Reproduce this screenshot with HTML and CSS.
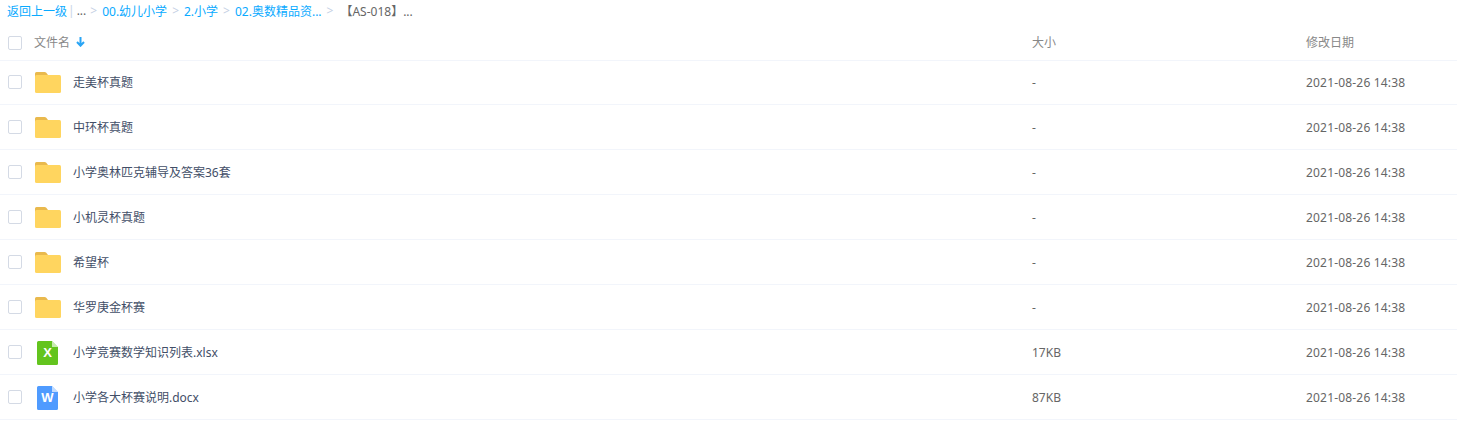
FILE: index.html
```html
<!DOCTYPE html>
<html lang="zh-CN">
<head>
    <meta charset="UTF-8">
    <title>文件列表</title>
    <link rel="stylesheet" href="styles.css">
</head>
<body>
    <svg class="icon-defs" width="0" height="0">
        <symbol id="folder" viewBox="0 0 26 21">
            <path d="M0 5V1.500A1.500 1.500 0 0 1 1.500 0h8c.8 0 1.300.3 1.800.8L13 3v2z" fill="#e9b94d"/>
            <rect y="3" width="26" height="18" rx="1.500" fill="#ffd55f"/>
        </symbol>
        <symbol id="file" viewBox="0 0 21 24">
            <path d="M1.500 0H15l6 6v16.500a1.500 1.500 0 0 1-1.500 1.500h-18A1.500 1.500 0 0 1 0 22.500v-21A1.500 1.500 0 0 1 1.500 0z" fill="currentColor"/>
            <path d="M15 0l6 6h-6z" fill="#fff" opacity=".65"/>
        </symbol>
    </svg>

    <div class="crumbs">
        <a href="#">返回上一级</a><span class="bar">|</span><span class="more">...</span>
        <span class="sep">&gt;</span><a href="#">00.幼儿小学</a>
        <span class="sep">&gt;</span><a href="#">2.小学</a>
        <span class="sep">&gt;</span><a href="#">02.奥数精品资...</a>
        <span class="sep">&gt;</span><span class="current">【AS-018】...</span>
    </div>

    <div class="row head">
        <span class="check"></span>
        <span class="name-head">文件名
            <svg class="sort" width="9" height="10" viewBox="0 0 9 10"><path d="M4.500 0v8.500M1 5l3.500 3.700L8 5" fill="none" stroke="#2aa5f5" stroke-width="2"/></svg>
        </span>
        <span class="size">大小</span>
        <span class="date">修改日期</span>
    </div>

    <div class="row">
        <span class="check"></span>
        <span class="icon"><svg width="26" height="21"><use href="#folder"/></svg></span>
        <span class="name">走美杯真题</span>
        <span class="size">-</span>
        <span class="date">2021-08-26 14:38</span>
    </div>
    <div class="row">
        <span class="check"></span>
        <span class="icon"><svg width="26" height="21"><use href="#folder"/></svg></span>
        <span class="name">中环杯真题</span>
        <span class="size">-</span>
        <span class="date">2021-08-26 14:38</span>
    </div>
    <div class="row">
        <span class="check"></span>
        <span class="icon"><svg width="26" height="21"><use href="#folder"/></svg></span>
        <span class="name">小学奥林匹克辅导及答案36套</span>
        <span class="size">-</span>
        <span class="date">2021-08-26 14:38</span>
    </div>
    <div class="row">
        <span class="check"></span>
        <span class="icon"><svg width="26" height="21"><use href="#folder"/></svg></span>
        <span class="name">小机灵杯真题</span>
        <span class="size">-</span>
        <span class="date">2021-08-26 14:38</span>
    </div>
    <div class="row">
        <span class="check"></span>
        <span class="icon"><svg width="26" height="21"><use href="#folder"/></svg></span>
        <span class="name">希望杯</span>
        <span class="size">-</span>
        <span class="date">2021-08-26 14:38</span>
    </div>
    <div class="row">
        <span class="check"></span>
        <span class="icon"><svg width="26" height="21"><use href="#folder"/></svg></span>
        <span class="name">华罗庚金杯赛</span>
        <span class="size">-</span>
        <span class="date">2021-08-26 14:38</span>
    </div>
    <div class="row">
        <span class="check"></span>
        <span class="icon">
            <span class="file xls"><svg width="21" height="24"><use href="#file"/></svg><b>X</b></span>
        </span>
        <span class="name">小学竞赛数学知识列表.xlsx</span>
        <span class="size">17KB</span>
        <span class="date">2021-08-26 14:38</span>
    </div>
    <div class="row">
        <span class="check"></span>
        <span class="icon">
            <span class="file doc"><svg width="21" height="24"><use href="#file"/></svg><b>W</b></span>
        </span>
        <span class="name">小学各大杯赛说明.docx</span>
        <span class="size">87KB</span>
        <span class="date">2021-08-26 14:38</span>
    </div>
</body>
</html>
```

FILE: styles.css
```css
/* Reset */
* {
    margin: 0;
    padding: 0;
    box-sizing: border-box;
}

body {
    background: #fff;
    font-family: "Noto Sans", "Noto Sans CJK SC", sans-serif;
    font-size: 12px;
    color: #424e67;
    overflow: hidden;
}

.icon-defs {
    position: absolute;
}

/* Breadcrumb */
.crumbs {
    display: flex;
    align-items: center;
    height: 21px;
    padding-left: 7px;
    white-space: nowrap;
}

.crumbs a {
    color: #09aaff;
    text-decoration: none;
}

.bar {
    margin: 0 2px 0 1px;
    color: #c8d3e6;
}

.more,
.current {
    color: #666;
}

.more {
    margin-right: -1px;
}

.sep {
    margin: 0 5px;
    color: #c5d0e4;
}

.current {
    margin-left: 2px;
}

/* Rows */
.row {
    display: flex;
    align-items: center;
    height: 45px;
    padding-left: 8px;
    border-bottom: 1px solid #f2f5fb;
}

.head {
    height: 40px;
    margin-bottom: -1px;
    padding-top: 3px;
    color: #888;
}

.check {
    width: 14px;
    height: 14px;
    flex-shrink: 0;
    border: 1px solid #d4dae5;
    border-radius: 2px;
}

.head .check {
    margin-top: 1px;
}

.name-head {
    display: flex;
    align-items: center;
    gap: 6px;
    width: 998px;
    margin-left: 12px;
}

.icon {
    display: flex;
    justify-content: center;
    width: 28px;
    margin-left: 12px;
}

.name {
    width: 959px;
    margin-left: 11px;
}

.size {
    width: 274px;
    color: #666;
}

.date {
    color: #666;
    letter-spacing: .18px;
}

.head .size,
.head .date {
    color: #888;
    letter-spacing: 0;
}

/* File type badges */
.file {
    position: relative;
    display: block;
    width: 21px;
    height: 24px;
    margin: 2px 1px 0 0;
}

.file svg {
    display: block;
}

.file b {
    position: absolute;
    top: 0;
    left: 0;
    width: 100%;
    color: #fff;
    font: bold 13px "Liberation Sans", sans-serif;
    text-align: center;
    line-height: 24px;
}

.xls {
    color: #63c41e;
}

.doc {
    color: #4f9bff;
}
```
